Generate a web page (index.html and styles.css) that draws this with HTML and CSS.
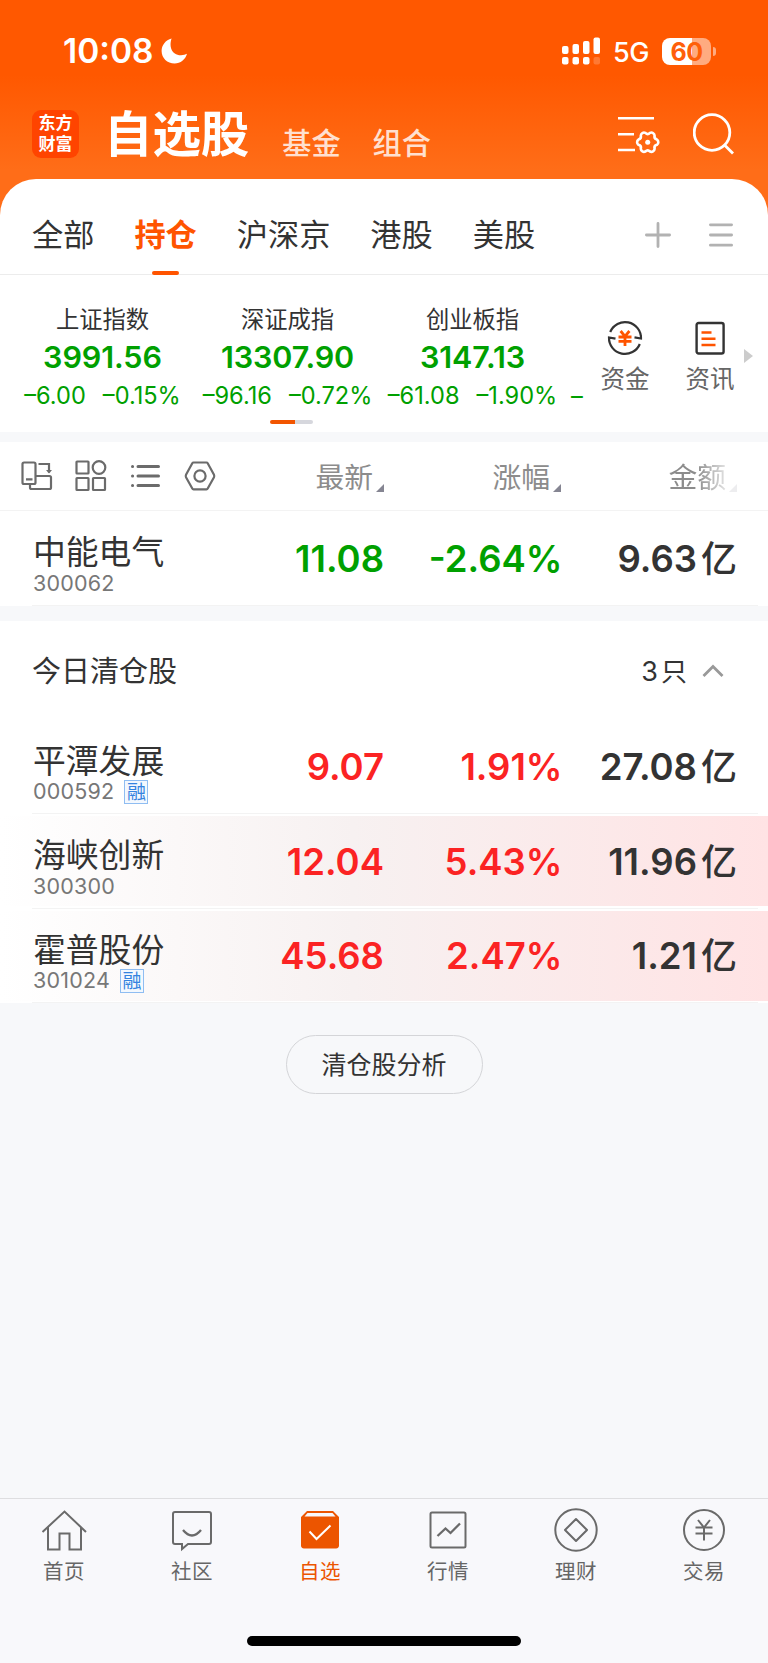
FILE: index.html
```html
<!DOCTYPE html>
<html lang="zh-CN">
  <head>
    <meta charset="UTF-8" />
    <meta name="viewport" content="width=device-width, initial-scale=1.0" />
    <title>自选股</title>
    <link rel="stylesheet" href="styles.css">
  </head>
  <body>
    <header class="header">
      <div class="status">
        <span class="time">10:08</span>
        <svg class="moon" width="27" height="26" viewBox="0 0 27 26">
          <path d="M10.6 0.4C8 7.5 10 17 20 17.200C22.500 17.200 24.500 16.500 26 15.800C24.500 21.500 19.500 25.500 13.600 25.500C6.300 25.500 0.600 20 0.600 13C0.600 7 4.600 2 10.600 0.400Z" fill="#fff" />
        </svg>
        <svg class="signal" width="39" height="28" viewBox="0 0 39 28" fill="#fff">
          <rect x="0" y="9" width="6.500" height="8" rx="2" />
          <rect x="10.500" y="7" width="6.500" height="10" rx="2" />
          <rect x="21" y="4" width="6.500" height="13" rx="2" />
          <rect x="31.500" y="0.500" width="6.500" height="16.500" rx="2" />
          <rect x="0" y="20" width="6.500" height="7.500" rx="2" />
          <rect x="10.500" y="20" width="6.500" height="7.500" rx="2" />
          <rect x="21" y="20" width="6.500" height="7.500" rx="2" />
          <rect x="31.500" y="20" width="6.500" height="7.500" rx="2" opacity="0.2" />
        </svg>
        <span class="network">5G</span>
        <span class="battery">60</span>
        <span class="battery-cap"></span>
      </div>
      <div class="nav">
        <div class="logo"><span>东方</span><span>财富</span></div>
        <h1>自选股</h1>
        <a class="nav-link">基金</a>
        <a class="nav-link">组合</a>
        <svg class="icon-filter" width="42" height="40" viewBox="0 0 42 40" fill="none" stroke="#fff" stroke-width="2.600">
          <path d="M0 3.300H36M0 19.300H16M0 35H17" />
          <g transform="translate(29.700 27.200)">
            <path d="M9.200-2.650A3.200 3.200 0 0 1 9.200 2.650Q6.060 3.500 6.900 6.670A3.200 3.200 0 0 1 2.320 9.300Q0 7-2.320 9.300A3.200 3.200 0 0 1-6.900 6.670Q-6.060 3.500-9.200 2.650A3.200 3.200 0 0 1-9.200-2.650Q-6.060-3.500-6.900-6.670A3.200 3.200 0 0 1-2.320-9.300Q0-7 2.320-9.300A3.200 3.200 0 0 1 6.900-6.670Q6.060-3.500 9.200-2.650Z" />
            <circle r="2.500" fill="#fff" stroke="none" />
          </g>
        </svg>
        <svg class="icon-search" width="42" height="42" viewBox="0 0 42 42" fill="none" stroke="#fff" stroke-width="2.800">
          <circle cx="19" cy="19.500" r="17.800" />
          <path d="M31.500 32L40 40.500" />
        </svg>
      </div>
    </header>

    <main>
      <nav class="tabs">
        <a>全部</a>
        <a class="active">持仓</a>
        <a>沪深京</a>
        <a>港股</a>
        <a>美股</a>
        <svg class="icon-plus" width="26" height="26" viewBox="0 0 26 26" stroke="#b2b2b2" stroke-width="2.800" stroke-linecap="round">
          <path d="M13 1.400V24.600M1.400 13H24.600" />
        </svg>
        <svg width="24" height="26" viewBox="0 0 24 26" stroke="#b2b2b2" stroke-width="2.800" stroke-linecap="round">
          <path d="M1.400 2.800H22.600M1.400 13H22.600M1.400 23.200H22.600" />
        </svg>
      </nav>

      <section class="market">
        <div class="indexes">
          <div class="index">
            <h5>上证指数</h5>
            <strong>3991.56</strong>
            <p><span>–6.00</span><span>–0.15%</span></p>
          </div>
          <div class="index">
            <h5>深证成指</h5>
            <strong>13307.90</strong>
            <p><span>–96.16</span><span>–0.72%</span></p>
          </div>
          <div class="index">
            <h5>创业板指</h5>
            <strong>3147.13</strong>
            <p><span>–61.08</span><span>–1.90%</span></p>
          </div>
          <div class="index index-next"><p>–</p></div>
        </div>
        <a class="shortcut">
          <svg width="36" height="36" viewBox="0 0 36 36" fill="none" stroke="#333" stroke-width="2.200">
            <path d="M3.200 12A16 16 0 0 1 34 18.500L27.500 17.300M32.800 24A16 16 0 0 1 2 17.500L8.500 18.700" />
            <path d="M13.600 11L18 16.300L22.400 11M18 16V26M11.500 17H24.500M11.500 21.300H24.500" stroke="#ff5400" stroke-width="2.800" />
          </svg>
          资金
        </a>
        <a class="shortcut">
          <svg width="36" height="36" viewBox="0 0 36 36" fill="none" stroke="#333" stroke-width="2.400">
            <rect x="4.600" y="3" width="27" height="30.500" rx="2" />
            <path d="M9.500 12.500H19.500M9.500 18.800H23.500M9.500 25H23.500" stroke="#ff5400" stroke-width="2.600" />
          </svg>
          资讯
        </a>
        <span class="more"></span>
        <div class="pager"></div>
      </section>

      <section class="holdings">
        <div class="columns">
          <div class="tools">
            <svg width="32" height="32" viewBox="0 0 32 32" fill="none" stroke="#6b6b6b" stroke-width="2.200">
              <rect x="1.500" y="2.500" width="13" height="21.500" rx="1.500" />
              <path d="M5 19.300H11.500M15 16H28.500A1.500 1.500 0 0 1 30 17.500V27.500A1.500 1.500 0 0 1 28.500 29H10.500A1.500 1.500 0 0 1 9 27.500V24.500M17.500 4H28V12.500" />
              <path d="M25 10L28 13.500L31 10Z" fill="#6b6b6b" stroke="none" />
            </svg>
            <svg width="32" height="32" viewBox="0 0 32 32" fill="none" stroke="#6b6b6b" stroke-width="2.200">
              <rect x="1.500" y="1.500" width="12" height="12" rx="0.500" />
              <circle cx="24" cy="7.500" r="6.300" />
              <rect x="1.500" y="18" width="12" height="12" rx="0.500" />
              <rect x="18" y="18" width="12" height="12" rx="0.500" />
            </svg>
            <svg width="32" height="32" viewBox="0 0 32 32" fill="none" stroke="#6b6b6b" stroke-width="3" stroke-linecap="round">
              <path d="M8 6.500H28.500M8 16H28.500M8 25.500H28.500M2.500 6.500H2.600M2.500 16H2.600M2.500 25.500H2.600" />
            </svg>
            <svg width="32" height="32" viewBox="0 0 32 32" fill="none" stroke="#6b6b6b" stroke-width="2.200" stroke-linejoin="round">
              <path d="M9.500 2.500H22.500Q23.300 2.500 23.700 3.200L30 14.800Q30.500 16 30 17.200L23.700 28.500Q23.300 29.300 22.500 29.300H9.500Q8.700 29.300 8.300 28.500L2 17.200Q1.500 16 2 14.800L8.300 3.200Q8.700 2.500 9.500 2.500Z" />
              <circle cx="16" cy="16" r="5.600" />
            </svg>
          </div>
          <span class="sort">最新</span>
          <span class="sort">涨幅</span>
          <span class="sort sort-fade">金额</span>
        </div>
        <div class="row down">
          <div class="stock">
            <h4>中能电气</h4>
            <p>300062</p>
          </div>
          <span class="value">11.08</span>
          <span class="value percent">-2.64%</span>
          <span class="value amount">9.63<i>亿</i></span>
        </div>
      </section>

      <section class="cleared">
        <div class="cleared-title">
          <h3>今日清仓股</h3>
          <span class="count">3<i>只</i></span>
          <svg width="22" height="14" viewBox="0 0 22 14" fill="none" stroke="#999" stroke-width="2.800">
            <path d="M1.500 12L11 2.500L20.500 12" />
          </svg>
        </div>
        <div class="row up">
          <div class="stock">
            <h4>平潭发展</h4>
            <p>000592<span class="tag">融</span></p>
          </div>
          <span class="value">9.07</span>
          <span class="value percent">1.91%</span>
          <span class="value amount">27.08<i>亿</i></span>
        </div>
        <div class="row up flash">
          <div class="stock">
            <h4>海峡创新</h4>
            <p>300300</p>
          </div>
          <span class="value">12.04</span>
          <span class="value percent">5.43%</span>
          <span class="value amount">11.96<i>亿</i></span>
        </div>
        <div class="row up flash">
          <div class="stock">
            <h4>霍普股份</h4>
            <p>301024<span class="tag">融</span></p>
          </div>
          <span class="value">45.68</span>
          <span class="value percent">2.47%</span>
          <span class="value amount">1.21<i>亿</i></span>
        </div>
      </section>

      <button class="analysis">清仓股分析</button>
    </main>

    <footer class="tabbar">
      <div class="tabbar-items">
        <a>
          <svg width="46" height="46" viewBox="0 0 46 46" fill="none" stroke="#6a6a6a" stroke-width="2">
            <path d="M1.500 24L23.500 3.500L45 24M7 19.500V41.500H18.500V25.500H28.500V41.500H40V19.500" />
          </svg>
          首页
        </a>
        <a>
          <svg width="46" height="46" viewBox="0 0 46 46" fill="none" stroke="#6a6a6a" stroke-width="2">
            <path d="M6 4H40A2 2 0 0 1 42 6V34A2 2 0 0 1 40 36H19L13 41V36H6A2 2 0 0 1 4 34V6A2 2 0 0 1 6 4Z" />
            <path d="M14 22Q23 33 32 22" stroke-width="2.300" />
          </svg>
          社区
        </a>
        <a class="current">
          <svg width="46" height="46" viewBox="0 0 46 46" fill="none">
            <path d="M10 3H36L42 9V37A3 3 0 0 1 39 40.500H7A3 3 0 0 1 4 37V9Z" fill="#ec5500" />
            <path d="M10.500 5H35.500L38.500 8.500H7.500Z" fill="#f8f8fb" />
            <path d="M12.500 23.500L19.500 31L33.500 17.500" stroke="#fff" stroke-width="2" />
          </svg>
          自选
        </a>
        <a>
          <svg width="46" height="46" viewBox="0 0 46 46" fill="none" stroke="#6a6a6a" stroke-width="2">
            <rect x="5.500" y="4.500" width="35" height="35" rx="1.500" />
            <path d="M12.500 28L20.500 20.500L25.500 25L35 15.500" stroke-width="2.300" />
          </svg>
          行情
        </a>
        <a>
          <svg width="46" height="46" viewBox="0 0 46 46" fill="none" stroke="#6a6a6a" stroke-width="2">
            <circle cx="23" cy="22" r="20.700" />
            <path d="M23 11L34 22L23 33L12 22Z" stroke-linejoin="round" />
          </svg>
          理财
        </a>
        <a>
          <svg width="46" height="46" viewBox="0 0 46 46" fill="none" stroke="#6a6a6a" stroke-width="2">
            <circle cx="23" cy="22" r="20" />
            <path d="M17 12L23 19.500L29 12M23 19V32.500M14.500 19.500H31.500M14.500 25.500H31.500" />
          </svg>
          交易
        </a>
      </div>
      <div class="home-bar"></div>
    </footer>
  </body>
</html>
```

FILE: styles.css
```css
* {
  box-sizing: border-box;
}
body {
  margin: 0;
  width: 768px;
  height: 1663px;
  display: flex;
  flex-direction: column;
  overflow: hidden;
  background-color: #f7f8fa;
  color: #333;
  font-family: Inter, "Noto Sans CJK SC", sans-serif;
  line-height: 1;
}
h1,
h3,
h4,
h5,
p {
  margin: 0;
  font-weight: 400;
}
i {
  font-style: normal;
}
svg {
  flex: none;
}

/* header */
.header {
  height: 215px;
  flex: none;
  background: linear-gradient(#ff5800 0, #ff5800 75px, #ff6d18 170px);
  color: #fff;
}
.status {
  height: 102px;
  display: flex;
  align-items: center;
  padding: 0 52px 0 63px;
}
.time {
  margin-top: 2px;
  font-size: 33.500px;
  font-weight: 600;
  width: 98px;
  white-space: nowrap;
}
.signal {
  margin-left: auto;
}
.network {
  width: 37px;
  margin: 3px 0 0 12px;
  font-size: 27px;
  font-weight: 500;
  letter-spacing: -0.5px;
}
.battery {
  width: 49px;
  height: 27px;
  margin-left: 12px;
  border-radius: 8px;
  background: linear-gradient(90deg, #fff 61%, #ffab80 61%);
  color: #ff5f0a;
  font-size: 25px;
  font-weight: 700;
  line-height: 28px;
  letter-spacing: -0.5px;
  text-align: center;
}
.battery-cap {
  width: 3px;
  height: 9px;
  margin-left: 2px;
  border-radius: 0 4px 4px 0;
  background-color: #ffab80;
}
.nav {
  height: 64px;
  display: flex;
  align-items: center;
  padding: 0 33px 0 32px;
}
.logo {
  width: 47px;
  height: 48px;
  display: flex;
  flex-direction: column;
  align-items: center;
  border-radius: 9px;
  background-color: #ff4400;
  font-size: 17px;
  font-weight: 700;
  padding-top: 3px;
}
.logo span {
  line-height: 21px;
}
h1 {
  margin: 2px 33px 0 25px;
  font-size: 48.500px;
  font-weight: 700;
  letter-spacing: -0.1px;
}
.nav-link {
  margin: 20px 32px 0 0;
  font-size: 29.200px;
  font-weight: 500;
  color: #ffe0d0;
}
.icon-filter {
  margin: 2px 33px 0 auto;
}

/* group tabs */
main {
  flex: 1;
  margin-top: -36px;
}
.tabs {
  height: 96px;
  display: flex;
  align-items: center;
  padding: 0 35px 0 32px;
  gap: 40px;
  border-bottom: 1px solid #ececec;
  border-radius: 36px 36px 0 0;
  background-color: #fff;
}
.tabs a {
  position: relative;
  margin-top: 17px;
  font-size: 31.200px;
  line-height: 40px;
}
.tabs svg {
  margin-top: 17px;
}
.tabs .active {
  color: #ff5400;
  font-weight: 700;
}
.active::after {
  content: "";
  position: absolute;
  left: 18px;
  bottom: -20px;
  width: 27px;
  height: 4px;
  border-radius: 2px;
  background-color: #ff5400;
}
.icon-plus {
  margin-left: auto;
  margin-right: -1.500px;
}

/* market indexes */
.market {
  position: relative;
  height: 157px;
  display: flex;
  padding-left: 10px;
  background-color: #fff;
}
.indexes {
  width: 574px;
  display: flex;
  overflow: hidden;
}
.index {
  width: 185px;
  flex: none;
  padding-top: 32px;
  text-align: center;
  color: #00a000;
}
.index h5 {
  font-size: 23.300px;
  line-height: 25px;
  color: #333;
}
.index strong {
  display: block;
  font-size: 30.500px;
  font-weight: 600;
  line-height: 50px;
  letter-spacing: -0.1px;
}
.index p {
  display: flex;
  justify-content: center;
  gap: 17px;
  font-size: 23.600px;
  line-height: 28px;
  white-space: nowrap;
}
.index-next {
  padding-top: 107px;
}
.index-next p {
  justify-content: flex-start;
  padding-left: 6px;
}
.shortcut {
  width: 85px;
  display: flex;
  flex-direction: column;
  align-items: center;
  gap: 11px;
  padding: 45px 3px 0 0;
  color: #666;
  font-size: 24.500px;
}
.more {
  margin: 74px 0 0 -10px;
  width: 0;
  height: 0;
  border: 7px solid transparent;
  border-left: 9px solid #ccc;
  border-right: 0;
}
.pager {
  position: absolute;
  left: 270px;
  top: 145px;
  width: 43px;
  height: 4px;
  border-radius: 2px;
  background: linear-gradient(90deg, #f25500 59%, #d6d7dd 59%);
}

/* stock list */
.holdings {
  margin: 10px 0 15px;
  background-color: #fff;
}
.columns,
.row {
  display: grid;
  grid-template-columns: 207px 177px 177px 176px;
  align-items: center;
}
.columns {
  height: 69px;
  border-bottom: 1px solid #f3f3f3;
}
.tools {
  display: flex;
  gap: 22.500px;
  padding: 0 0 0 20.500px;
}
.sort {
  display: flex;
  justify-content: flex-end;
  gap: 3px;
  padding-top: 4px;
  color: #8c8c8c;
  font-size: 28.800px;
}
.sort::after {
  content: "";
  align-self: flex-end;
  border: 4px solid;
  border-color: transparent #858592 #858592 transparent;
}
.sort-fade {
  -webkit-mask-image: linear-gradient(90deg, #000 77%, rgba(0, 0, 0, 0.15) 96%);
  mask-image: linear-gradient(90deg, #000 77%, rgba(0, 0, 0, 0.15) 96%);
}
.row {
  position: relative;
  height: 94.500px;
  background-color: #fff;
}
.row::after {
  content: "";
  position: absolute;
  left: 32px;
  right: 10px;
  bottom: 0;
  height: 1px;
  background-color: #f3f3f3;
}
.stock {
  padding: 14px 0 0 33px;
  white-space: nowrap;
}
.stock h4 {
  font-size: 32.800px;
  line-height: 36px;
}
.stock p {
  display: flex;
  align-items: center;
  height: 26px;
  font-size: 21.500px;
  letter-spacing: 0.2px;
  color: #777;
}
.tag {
  width: 24px;
  height: 24px;
  margin-left: 10px;
  border: 1.500px solid #8fbdf2;
  background-color: #f3f8fe;
  color: #3483e0;
  font-size: 19px;
  line-height: 23px;
  letter-spacing: 0;
  text-align: center;
}
.value {
  padding-top: 1px;
  font-size: 36.500px;
  font-weight: 600;
  text-align: right;
  white-space: nowrap;
}
.percent {
  margin-right: -1.500px;
}
.down .value {
  color: #00a000;
}
.up .value {
  color: #fb2323;
}
.row .amount {
  color: #333;
}
.amount i {
  margin-left: 4px;
  font-size: 36px;
  font-weight: 500;
}
.flash {
  background: linear-gradient(90deg, #fff 0, #f7f1f1 46%, #ffe3e4 100%) 0 2px / 100% 90px no-repeat #fff;
}

/* cleared today */
.cleared-title {
  height: 99px;
  display: flex;
  align-items: center;
  padding: 2px 44px 0 32px;
  background-color: #fff;
}
.cleared-title h3 {
  flex: 1;
  font-size: 29px;
}
.count {
  margin-right: 15px;
  font-size: 27px;
}
.count i {
  margin-left: 3px;
  font-size: 26px;
}
.analysis {
  display: block;
  width: 197px;
  height: 59px;
  margin: 32px auto 0;
  padding: 0;
  border: 1px solid #d4d5d8;
  border-radius: 30px;
  background: none;
  color: #333;
  font: 25px/58px Inter, "Noto Sans CJK SC", sans-serif;
}

/* bottom bar */
.tabbar {
  height: 165px;
  flex: none;
  border-top: 1px solid #dedee0;
  background-color: #f8f8fb;
}
.tabbar-items {
  height: 137px;
  display: grid;
  grid-template-columns: repeat(6, 1fr);
}
.tabbar-items a {
  display: flex;
  flex-direction: column;
  align-items: center;
  gap: 8px;
  padding-top: 9px;
  color: #666;
  font-size: 20.500px;
  letter-spacing: 0.5px;
}
.tabbar-items .current {
  color: #ec5500;
}
.home-bar {
  width: 274px;
  height: 10px;
  margin: 0 auto;
  border-radius: 5px;
  background-color: #000;
}
```
